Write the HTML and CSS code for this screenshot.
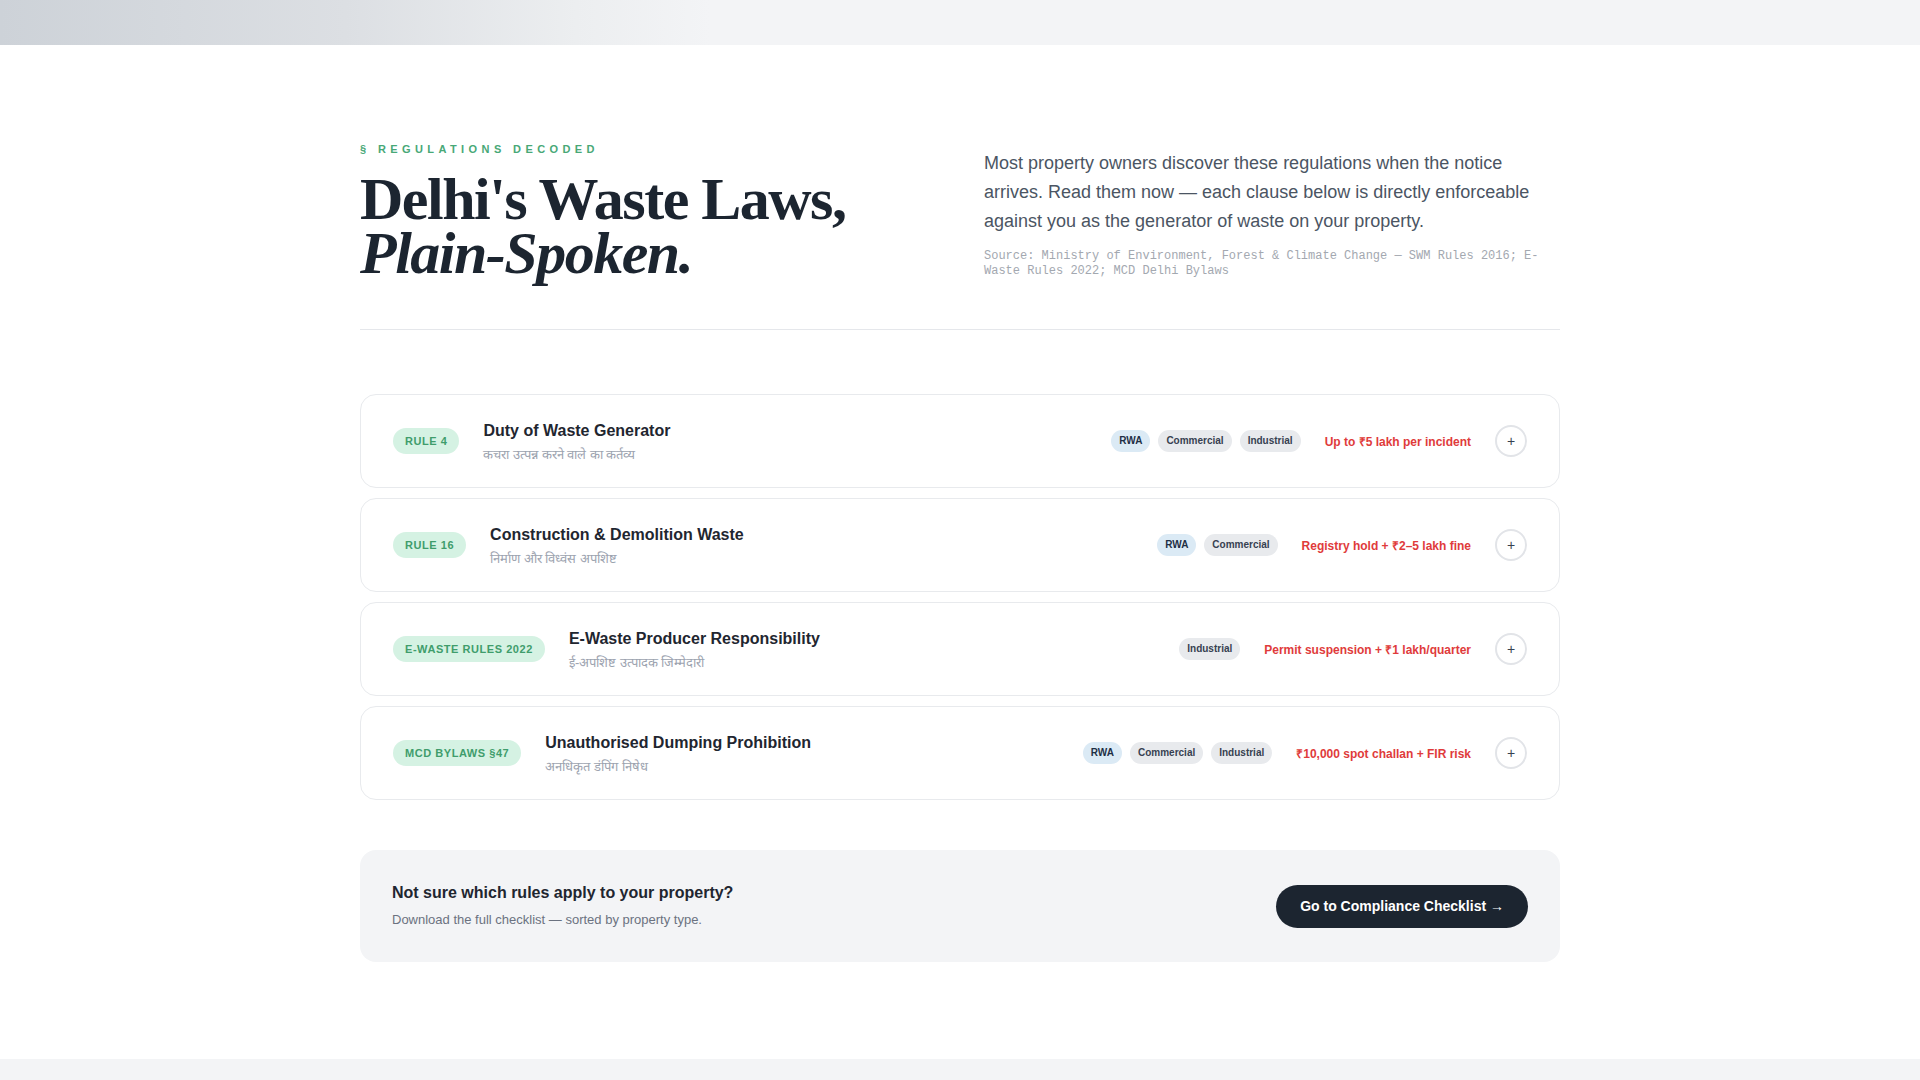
FILE: index.html
```html
<!DOCTYPE html>
<html lang="en">

<head>
    <meta charset="UTF-8">
    <meta name="viewport" content="width=device-width, initial-scale=1.0">
    <title>Delhi's Waste Laws, Plain-Spoken</title>
    <link rel="stylesheet" href="styles.css">
</head>

<body>
    <div class="topbar"></div>

    <main class="page">
        <header class="intro">
            <div class="intro-left">
                <p class="eyebrow">§ Regulations Decoded</p>
                <h1 class="headline">Delhi's Waste Laws,<br><em>Plain-Spoken.</em></h1>
            </div>
            <div class="intro-right">
                <p class="lead">Most property owners discover these regulations when the notice arrives. Read them now — each clause below is directly enforceable against you as the generator of waste on your property.</p>
                <p class="source">Source: Ministry of Environment, Forest &amp; Climate Change — SWM Rules 2016; E-Waste Rules 2022; MCD Delhi Bylaws</p>
            </div>
        </header>

        <section class="rules">
            <div class="rule">
                <span class="rule-code">Rule 4</span>
                <div class="rule-name">
                    <h3>Duty of Waste Generator</h3>
                    <p lang="hi">कचरा उत्पन्न करने वाले का कर्तव्य</p>
                </div>
                <div class="rule-meta">
                    <span class="tag tag-rwa">RWA</span>
                    <span class="tag">Commercial</span>
                    <span class="tag">Industrial</span>
                    <span class="penalty">Up to ₹5 lakh per incident</span>
                    <button class="toggle">+</button>
                </div>
            </div>

            <div class="rule">
                <span class="rule-code">Rule 16</span>
                <div class="rule-name">
                    <h3>Construction &amp; Demolition Waste</h3>
                    <p lang="hi">निर्माण और विध्वंस अपशिष्ट</p>
                </div>
                <div class="rule-meta">
                    <span class="tag tag-rwa">RWA</span>
                    <span class="tag">Commercial</span>
                    <span class="penalty">Registry hold + ₹2–5 lakh fine</span>
                    <button class="toggle">+</button>
                </div>
            </div>

            <div class="rule">
                <span class="rule-code">E-Waste Rules 2022</span>
                <div class="rule-name">
                    <h3>E-Waste Producer Responsibility</h3>
                    <p lang="hi">ई-अपशिष्ट उत्पादक जिम्मेदारी</p>
                </div>
                <div class="rule-meta">
                    <span class="tag">Industrial</span>
                    <span class="penalty">Permit suspension + ₹1 lakh/quarter</span>
                    <button class="toggle">+</button>
                </div>
            </div>

            <div class="rule">
                <span class="rule-code">MCD Bylaws §47</span>
                <div class="rule-name">
                    <h3>Unauthorised Dumping Prohibition</h3>
                    <p lang="hi">अनधिकृत डंपिंग निषेध</p>
                </div>
                <div class="rule-meta">
                    <span class="tag tag-rwa">RWA</span>
                    <span class="tag">Commercial</span>
                    <span class="tag">Industrial</span>
                    <span class="penalty">₹10,000 spot challan + FIR risk</span>
                    <button class="toggle">+</button>
                </div>
            </div>
        </section>

        <section class="cta">
            <div>
                <h4>Not sure which rules apply to your property?</h4>
                <p>Download the full checklist — sorted by property type.</p>
            </div>
            <a class="cta-button" href="#">Go to Compliance Checklist →</a>
        </section>
    </main>

    <footer class="footer"></footer>
</body>

</html>
```

FILE: styles.css
```css
body {
    margin: 0;
    font-family: "Liberation Sans", Arial, sans-serif;
    background-color: #fff;
    color: #1f2937;
}

.topbar {
    height: 45px;
    background: linear-gradient(90deg, #cdd2d8 0%, #dcdfe3 18%, #eceef0 30%, #f3f4f6 37%, #f3f4f6 100%);
}

.page {
    width: 1200px;
    margin: 0 auto;
    padding: 96px 0 97px;
}

/* intro */
.intro {
    display: grid;
    grid-template-columns: 1fr 1fr;
    gap: 48px;
    align-items: end;
    padding-bottom: 49px;
    border-bottom: 1px solid #e5e7eb;
}

.eyebrow {
    margin: 0 0 15px;
    font-size: 11px;
    font-weight: bold;
    line-height: 16px;
    letter-spacing: 0.4em;
    text-transform: uppercase;
    color: #48a877;
}

.headline {
    margin: 0;
    font-family: "Liberation Serif", "Times New Roman", serif;
    font-size: 60px;
    font-weight: bold;
    line-height: 0.9;
    letter-spacing: -0.025em;
    color: #1c2530;
}

.headline em {
    font-style: italic;
}

.lead {
    margin: 0 0 12px;
    font-size: 18px;
    line-height: 1.63;
    color: #4b5563;
}

.source {
    margin: 0;
    font-family: "Liberation Mono", "Courier New", monospace;
    font-size: 12px;
    line-height: 1.3;
    color: #a3a8b0;
}

/* rule list */
.rules {
    display: flex;
    flex-direction: column;
    gap: 10px;
    margin-top: 64px;
}

.rule {
    display: flex;
    align-items: center;
    gap: 24px;
    padding: 22px 32px;
    border: 1px solid #e8eaed;
    border-radius: 16px;
    background-color: #fff;
}

.rule-code {
    flex-shrink: 0;
    padding: 6px 12px;
    border-radius: 999px;
    background-color: #d5f2e3;
    color: #3f9d6c;
    font-size: 11px;
    font-weight: bold;
    line-height: 1.3;
    letter-spacing: 0.05em;
    text-transform: uppercase;
}

.rule-name {
    flex: 1;
    margin-top: 4px;
}

.rule-name h3 {
    margin: 0 0 4px;
    font-size: 16px;
    line-height: 20px;
    color: #1f2630;
}

.rule-name p {
    margin: 0;
    font-size: 13px;
    line-height: 20px;
    color: #9ca3af;
}

.rule-meta {
    display: flex;
    align-items: center;
    gap: 8px;
}

.tag {
    padding: 5px 8px;
    border-radius: 999px;
    background-color: #e8eaed;
    color: #374151;
    font-size: 10px;
    font-weight: bold;
    line-height: 1.25;
}

.tag-rwa {
    background-color: #dbeaf5;
    color: #1e2f45;
}

.penalty {
    margin: 0 16px;
    font-size: 12px;
    font-weight: bold;
    color: #e03b3b;
}

.toggle {
    width: 32px;
    height: 32px;
    padding: 0;
    border: 2px solid #e2e4e8;
    border-radius: 50%;
    background-color: #fff;
    color: #374151;
    font-family: "Liberation Sans", Arial, sans-serif;
    font-size: 14px;
    line-height: 1;
    cursor: pointer;
}

/* call to action */
.cta {
    display: flex;
    align-items: center;
    justify-content: space-between;
    margin-top: 50px;
    padding: 33px 32px 32px;
    border-radius: 16px;
    background-color: #f3f4f6;
}

.cta h4 {
    margin: 0 0 7px;
    font-size: 16px;
    line-height: 20px;
    color: #1f2630;
}

.cta p {
    margin: 0;
    font-size: 13px;
    line-height: 20px;
    color: #6b7280;
}

.cta-button {
    padding: 13px 24px;
    border-radius: 999px;
    background-color: #1c2530;
    color: #fff;
    font-size: 14px;
    font-weight: bold;
    line-height: 17px;
    text-decoration: none;
}

.footer {
    height: 40px;
    background-color: #f3f4f6;
}
```
